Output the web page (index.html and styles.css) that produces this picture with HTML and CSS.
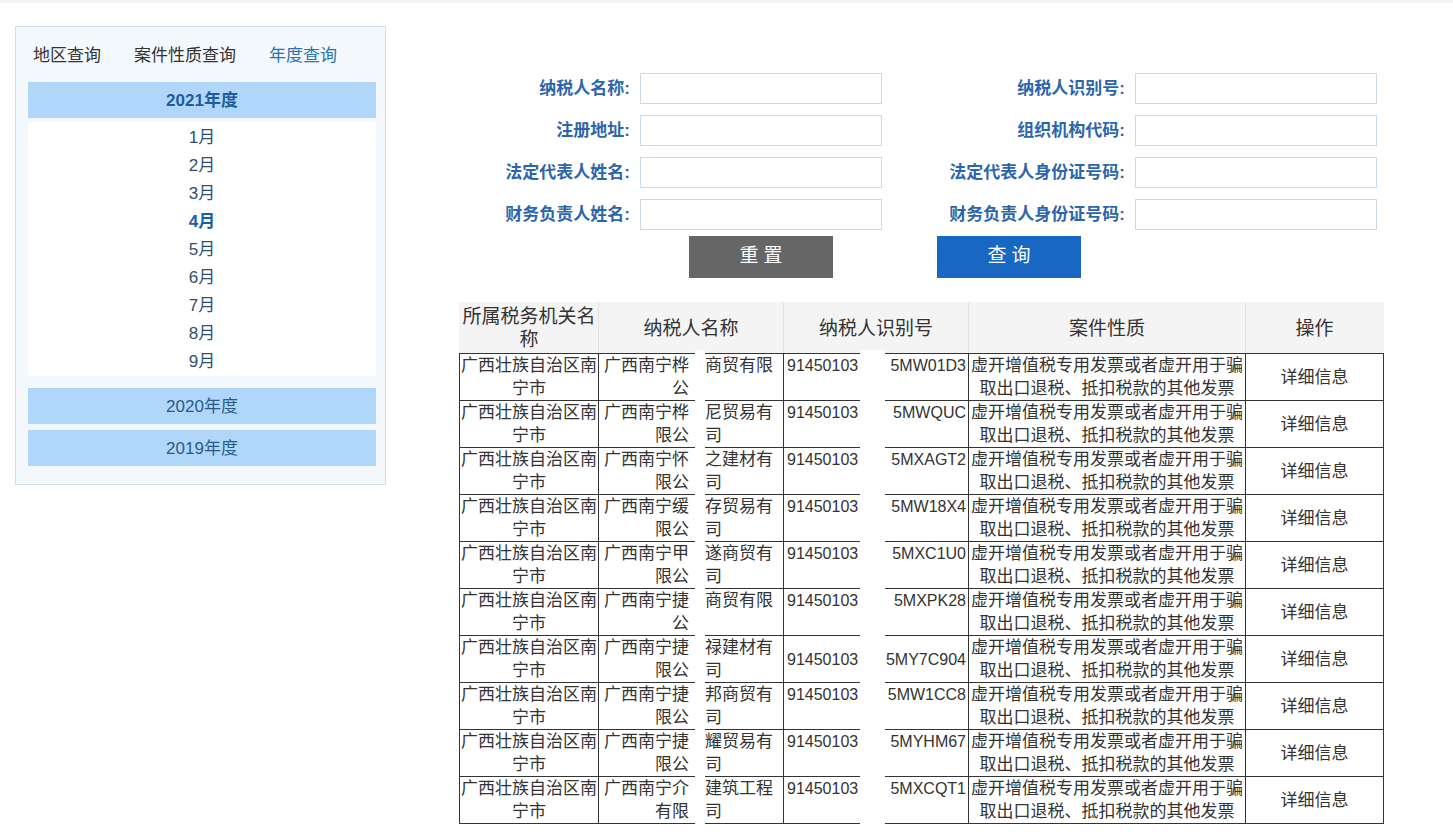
FILE: index.html
```html
<!DOCTYPE html>
<html lang="zh-CN">
<head>
<meta charset="utf-8">
<title>案件查询</title>
<link rel="stylesheet" href="styles.css">
</head>
<body>
<div class="topbar"></div>
<div class="page">
  <aside class="side">
    <div class="tabs">
      <span class="tab">地区查询</span>
      <span class="tab">案件性质查询</span>
      <span class="tab tab-active">年度查询</span>
    </div>
    <div class="year year-open">2021年度</div>
    <ul class="months">
      <li>1月</li>
      <li>2月</li>
      <li>3月</li>
      <li class="month-active">4月</li>
      <li>5月</li>
      <li>6月</li>
      <li>7月</li>
      <li>8月</li>
      <li>9月</li>
    </ul>
    <div class="year year-first">2020年度</div>
    <div class="year year-next">2019年度</div>
  </aside>

  <main class="main">
    <form class="form">
      <label class="lbl lbl-left">纳税人名称:</label><input class="inp" type="text">
      <label class="lbl">纳税人识别号:</label><input class="inp" type="text">
      <label class="lbl lbl-left">注册地址:</label><input class="inp" type="text">
      <label class="lbl">组织机构代码:</label><input class="inp" type="text">
      <label class="lbl lbl-left">法定代表人姓名:</label><input class="inp" type="text">
      <label class="lbl">法定代表人身份证号码:</label><input class="inp" type="text">
      <label class="lbl lbl-left">财务负责人姓名:</label><input class="inp" type="text">
      <label class="lbl">财务负责人身份证号码:</label><input class="inp" type="text">
    </form>
    <div class="btns">
      <button class="btn btn-reset" type="button">重置</button>
      <button class="btn btn-query" type="button">查询</button>
    </div>

    <div class="tablewrap">
      <table class="grid">
        <colgroup>
          <col class="c1"><col class="c2"><col class="c3"><col class="c4"><col class="c5">
        </colgroup>
        <thead>
          <tr>
            <th>所属税务机关名称</th>
            <th>纳税人名称</th>
            <th>纳税人识别号</th>
            <th>案件性质</th>
            <th>操作</th>
          </tr>
        </thead>
        <tbody>
          <tr>
            <td>广西壮族自治区南宁市</td>
            <td><div class="split"><div class="sl">广西南宁桦<br>公</div><div class="sr">商贸有限<br>&nbsp;</div></div></td>
            <td class="idc"><div class="id"><span>91450103</span><span>5MW01D3</span></div><div>&nbsp;</div></td>
            <td>虚开增值税专用发票或者虚开用于骗取出口退税、抵扣税款的其他发票</td>
            <td>详细信息</td>
          </tr>
          <tr>
            <td>广西壮族自治区南宁市</td>
            <td><div class="split"><div class="sl">广西南宁桦<br>限公</div><div class="sr">尼贸易有<br>司</div></div></td>
            <td class="idc"><div class="id"><span>91450103</span><span>5MWQUC</span></div><div>&nbsp;</div></td>
            <td>虚开增值税专用发票或者虚开用于骗取出口退税、抵扣税款的其他发票</td>
            <td>详细信息</td>
          </tr>
          <tr>
            <td>广西壮族自治区南宁市</td>
            <td><div class="split"><div class="sl">广西南宁怀<br>限公</div><div class="sr">之建材有<br>司</div></div></td>
            <td class="idc"><div class="id"><span>91450103</span><span>5MXAGT2</span></div><div>&nbsp;</div></td>
            <td>虚开增值税专用发票或者虚开用于骗取出口退税、抵扣税款的其他发票</td>
            <td>详细信息</td>
          </tr>
          <tr>
            <td>广西壮族自治区南宁市</td>
            <td><div class="split"><div class="sl">广西南宁缓<br>限公</div><div class="sr">存贸易有<br>司</div></div></td>
            <td class="idc"><div class="id"><span>91450103</span><span>5MW18X4</span></div><div>&nbsp;</div></td>
            <td>虚开增值税专用发票或者虚开用于骗取出口退税、抵扣税款的其他发票</td>
            <td>详细信息</td>
          </tr>
          <tr>
            <td>广西壮族自治区南宁市</td>
            <td><div class="split"><div class="sl">广西南宁甲<br>限公</div><div class="sr">遂商贸有<br>司</div></div></td>
            <td class="idc"><div class="id"><span>91450103</span><span>5MXC1U0</span></div><div>&nbsp;</div></td>
            <td>虚开增值税专用发票或者虚开用于骗取出口退税、抵扣税款的其他发票</td>
            <td>详细信息</td>
          </tr>
          <tr>
            <td>广西壮族自治区南宁市</td>
            <td><div class="split"><div class="sl">广西南宁捷<br>公</div><div class="sr">商贸有限<br>&nbsp;</div></div></td>
            <td class="idc"><div class="id"><span>91450103</span><span>5MXPK28</span></div><div>&nbsp;</div></td>
            <td>虚开增值税专用发票或者虚开用于骗取出口退税、抵扣税款的其他发票</td>
            <td>详细信息</td>
          </tr>
          <tr>
            <td>广西壮族自治区南宁市</td>
            <td><div class="split"><div class="sl">广西南宁捷<br>限公</div><div class="sr">禄建材有<br>司</div></div></td>
            <td class="idc idc-mid"><div class="id"><span>91450103</span><span>5MY7C904</span></div></td>
            <td>虚开增值税专用发票或者虚开用于骗取出口退税、抵扣税款的其他发票</td>
            <td>详细信息</td>
          </tr>
          <tr>
            <td>广西壮族自治区南宁市</td>
            <td><div class="split"><div class="sl">广西南宁捷<br>限公</div><div class="sr">邦商贸有<br>司</div></div></td>
            <td class="idc"><div class="id"><span>91450103</span><span>5MW1CC8</span></div><div>&nbsp;</div></td>
            <td>虚开增值税专用发票或者虚开用于骗取出口退税、抵扣税款的其他发票</td>
            <td>详细信息</td>
          </tr>
          <tr>
            <td>广西壮族自治区南宁市</td>
            <td><div class="split"><div class="sl">广西南宁捷<br>限公</div><div class="sr">耀贸易有<br>司</div></div></td>
            <td class="idc"><div class="id"><span>91450103</span><span>5MYHM67</span></div><div>&nbsp;</div></td>
            <td>虚开增值税专用发票或者虚开用于骗取出口退税、抵扣税款的其他发票</td>
            <td>详细信息</td>
          </tr>
          <tr>
            <td>广西壮族自治区南宁市</td>
            <td><div class="split"><div class="sl">广西南宁介<br>有限</div><div class="sr">建筑工程<br>司</div></div></td>
            <td class="idc"><div class="id"><span>91450103</span><span>5MXCQT1</span></div><div>&nbsp;</div></td>
            <td>虚开增值税专用发票或者虚开用于骗取出口退税、抵扣税款的其他发票</td>
            <td>详细信息</td>
          </tr>
        </tbody>
      </table>
      <div class="mask mask-name"></div>
      <div class="mask mask-id"></div>
    </div>
  </main>
</div>
</body>
</html>
```

FILE: styles.css
```css
* { box-sizing: border-box; }

html, body {
  margin: 0;
  padding: 0;
  background: #ffffff;
}

body {
  font-family: "Liberation Sans", "Noto Sans CJK SC", sans-serif;
  color: #333333;
  font-size: 17px;
}

.topbar {
  height: 3px;
  background: #f2f2f2;
}

.page {
  display: flex;
  align-items: flex-start;
  padding: 23px 0 0 15px;
}

/* ---------- side panel ---------- */
.side {
  width: 371px;
  height: 459px;
  background: #f3f8fc;
  border: 1px solid #d2dfea;
  padding: 0 0 0 12px;
}

.tabs {
  display: flex;
  gap: 33px;
  padding: 17px 0 0 5px;
  height: 55px;
  line-height: 24px;
  font-size: 17px;
}

.tab { color: #333333; }
.tab-active { color: #2a72b5; }

.year {
  width: 348px;
  height: 36px;
  padding-top: 2px;
  line-height: 34px;
  text-align: center;
  background: #b0d7fa;
  color: #2a5a8c;
  font-size: 17px;
}

.year-open {
  font-weight: bold;
  color: #1f5c9e;
}

.year-first { margin-top: 12px; }
.year-next { margin-top: 6px; }

.months {
  list-style: none;
  margin: 4px 0 0 0;
  padding: 2px 0 0 0;
  height: 254px;
  width: 348px;
  background: #ffffff;
}

.months li {
  height: 28px;
  line-height: 28px;
  text-align: center;
  color: #2f4f72;
  font-size: 17px;
}

.months li.month-active {
  font-weight: bold;
  color: #1b5ea8;
}

/* ---------- main ---------- */
.main {
  margin-left: 73px;
  padding-top: 47px;
}

.form {
  display: grid;
  grid-template-columns: 171px 242px 233px 242px;
  column-gap: 10px;
  row-gap: 11px;
  align-items: center;
}

.lbl {
  text-align: right;
  font-weight: bold;
  color: #2d65aa;
  font-size: 17px;
  line-height: 31px;
  white-space: nowrap;
}

.inp {
  width: 242px;
  height: 31px;
  border: 1px solid #c9dbe8;
  background: #ffffff;
  margin: 0;
  padding: 0 4px;
  outline: none;
}

.btns {
  display: flex;
  gap: 104px;
  padding-left: 230px;
  margin-top: 6px;
}

.btn {
  width: 144px;
  height: 42px;
  border: 0;
  color: #ffffff;
  font-family: "Liberation Sans", "Noto Sans CJK SC", sans-serif;
  font-size: 19px;
  line-height: 40px;
  letter-spacing: 5px;
  padding: 0 0 2px 5px;
  cursor: pointer;
}

.btn-reset { background: #666666; }
.btn-query { background: #1767c3; }

/* ---------- table ---------- */
.tablewrap {
  position: relative;
  margin-top: 24px;
  width: 924px;
}

.grid {
  width: 924px;
  table-layout: fixed;
  border-collapse: collapse;
}

.c1 { width: 139px; }
.c2 { width: 185px; }
.c3 { width: 185px; }
.c4 { width: 277px; }
.c5 { width: 138px; }

.grid th {
  background: #f4f4f4;
  font-weight: normal;
  font-size: 19px;
  line-height: 23px;
  height: 50px;
  padding: 2px 1px;
  color: #333333;
  text-align: center;
  border-top: 1px solid #f4f4f4;
  border-left: 1px solid #e2e2e2;
  border-right: 1px solid #e2e2e2;
  border-bottom: 1px solid #333333;
}

.grid th:first-child { border-left-color: #f4f4f4; }
.grid th:last-child { border-right-color: #f4f4f4; }

.grid td {
  border: 1px solid #333333;
  padding: 0 1px;
  height: 47px;
  line-height: 23px;
  text-align: center;
  vertical-align: middle;
  color: #333333;
  font-size: 17px;
}

.split {
  display: flex;
  align-items: flex-start;
}

.sl {
  width: 89px;
  text-align: right;
  white-space: nowrap;
}

.sr {
  margin-left: 16px;
  text-align: left;
  white-space: nowrap;
}

.grid td.idc {
  padding: 0 2px 0 3px;
  font-size: 16px;
}

.id {
  display: flex;
  justify-content: space-between;
}

.mask {
  position: absolute;
  top: 48px;
  bottom: -3px;
  background: #ffffff;
}

.mask-name {
  left: 236px;
  width: 10px;
}

.mask-id {
  left: 401px;
  width: 25px;
}
```
